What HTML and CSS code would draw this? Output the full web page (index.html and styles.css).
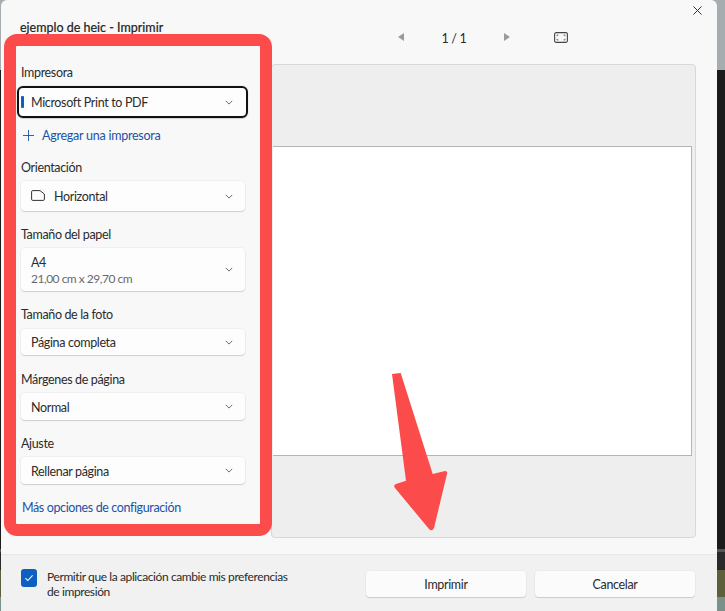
FILE: index.html
```html
<!DOCTYPE html>
<html>
<head>
<title>ejemplo de heic - Imprimir</title>
<link rel="stylesheet" href="styles.css">
</head>
<body>

<div class="backdrop">
  <div class="dialog">
    <div class="main">
      <div class="side">
        <h1 class="title">ejemplo de heic - Imprimir</h1>

        <div class="field-label printer-label">Impresora</div>
        <div class="select printer-select">
          <span class="accent"></span>
          <span class="value">Microsoft Print to PDF</span>
          <svg class="chevron" viewBox="0 0 10 6"><path d="M1 1l4 4 4-4"/></svg>
        </div>
        <div class="add-printer">
          <svg class="plus" viewBox="0 0 12 12"><path d="M6 0v12M0 6h12"/></svg>
          <a>Agregar una impresora</a>
        </div>

        <div class="field-label orient-label">Orientación</div>
        <div class="select">
          <svg class="page-icon" viewBox="0 0 14 11"><path d="M1.8.6H9l4.4 3.4v5.2a1.2 1.2 0 0 1-1.2 1.2H1.8A1.2 1.2 0 0 1 .6 9.2V1.8A1.2 1.2 0 0 1 1.8.6z"/></svg>
          <span class="value">Horizontal</span>
          <svg class="chevron" viewBox="0 0 10 6"><path d="M1 1l4 4 4-4"/></svg>
        </div>

        <div class="field-label">Tamaño del papel</div>
        <div class="select select-tall">
          <span class="value-stack">
            <span class="value">A4</span>
            <span class="sub">21,00 cm x 29,70 cm</span>
          </span>
          <svg class="chevron" viewBox="0 0 10 6"><path d="M1 1l4 4 4-4"/></svg>
        </div>

        <div class="field-label photo-label">Tamaño de la foto</div>
        <div class="select select-short">
          <span class="value">Página completa</span>
          <svg class="chevron" viewBox="0 0 10 6"><path d="M1 1l4 4 4-4"/></svg>
        </div>

        <div class="field-label margin-label">Márgenes de página</div>
        <div class="select select-mid">
          <span class="value">Normal</span>
          <svg class="chevron" viewBox="0 0 10 6"><path d="M1 1l4 4 4-4"/></svg>
        </div>

        <div class="field-label">Ajuste</div>
        <div class="select select-mid">
          <span class="value">Rellenar página</span>
          <svg class="chevron" viewBox="0 0 10 6"><path d="M1 1l4 4 4-4"/></svg>
        </div>

        <a class="more-link">Más opciones de configuración</a>
      </div>

      <div class="preview-side">
        <div class="pager">
          <svg class="nav-arrow" viewBox="0 0 6 8"><path d="M6 0v8L0 4z"/></svg>
          <span class="page-count">1 / 1</span>
          <svg class="nav-arrow" viewBox="0 0 6 8"><path d="M0 0v8l6-4z"/></svg>
          <svg class="fit-icon" viewBox="0 0 14 11">
            <rect class="fit-frame" x=".6" y=".6" width="12.8" height="9.8" rx="1.6"/>
            <path class="fit-corners" d="M3 4.2V3h1.4M11 4.2V3H9.6M3 6.8V8h1.4M11 6.8V8H9.6"/>
          </svg>
        </div>
        <div class="preview">
          <div class="sheet"></div>
        </div>
      </div>
    </div>

    <div class="footer">
      <div class="check-box">
        <svg viewBox="0 0 12 10"><path d="M1.5 5.2l3 3 6-6.4"/></svg>
      </div>
      <div class="check-text">Permitir que la aplicación cambie mis preferencias<br>de impresión</div>
      <div class="buttons">
        <button>Imprimir</button>
        <button>Cancelar</button>
      </div>
    </div>

    <svg class="close" viewBox="0 0 10 10"><path d="M.5.5l9 9M9.5.5l-9 9"/></svg>
  </div>
</div>

<!-- red marks drawn over the screenshot -->
<div class="mark-box"></div>
<svg class="mark-arrow" viewBox="0 0 60 165">
  <path d="M2 4L10.7 3L42.7 104L55 101Q58 101 57 104L44 158Q42 162 39 159L5 118Q3 115 6 114L16 110.7Z"/>
</svg>

</body>
</html>
```

FILE: styles.css
```css
* {
  box-sizing: border-box;
}

html, body {
  height: 100%;
}

body {
  margin: 0;
  font-family: Lato, "Noto Sans", sans-serif;
  font-size: 12.5px;
  letter-spacing: -0.35px;
  color: #2b2b2b;
  overflow: hidden;
  background-color: #1c1c1c;
}

.backdrop {
  height: 611px;
  padding-left: 1px;
  background: linear-gradient(#a6adb0 0, #a6adb0 70px, #1b1b1b 70px, #1b1b1b 549px, #555 549px, #555 552px, #2a2a2a 552px, #2a2a2a 570px, #5d5f3a 570px, #5d5f3a 597px, #7a9088 597px);
}

.dialog {
  position: relative;
  width: 716px;
  height: 611px;
  display: flex;
  flex-direction: column;
  background-color: #f8f8f8;
  border-radius: 6px 6px 0 0;
}

.main {
  flex: 1;
  display: flex;
}

.side {
  width: 270px;
  padding: 20px 0 0 20px;
  flex-shrink: 0;
}

.title {
  margin: 0 0 0 -1px;
  font-size: 12.5px;
  line-height: 16px;
  font-weight: 400;
  letter-spacing: 0;
  color: #222;
  -webkit-text-stroke: 0.2px #222;
}

.field-label {
  margin-top: 16px;
  line-height: 16px;
  padding-bottom: 5px;
}

.printer-label {
  margin-top: 29px;
}

.orient-label {
  margin-top: 17px;
}

.photo-label {
  padding-bottom: 6px;
}

.margin-label {
  margin-top: 17px;
}

.select {
  width: 224px;
  height: 30px;
  padding: 0 12px 0 10px;
  display: flex;
  align-items: center;
  background-color: #fdfdfd;
  border-radius: 4px;
  box-shadow: 0 1px 1px rgba(0, 0, 0, 0.14), 0 0 0 1px rgba(0, 0, 0, 0.03);
}

.select-tall {
  height: 43px;
}

.select-short {
  height: 26px;
}

.select-mid {
  height: 27px;
}

.printer-select {
  width: 231px;
  height: 32px;
  margin-left: -4px;
  padding-left: 2px;
  padding-right: 13px;
  border: 2px solid #111;
  border-radius: 6px;
}

.accent {
  width: 3px;
  height: 12px;
  margin-right: 7px;
  border-radius: 1px;
  background-color: #0f5fc0;
}

.value {
  flex: 1;
  padding-top: 2px;
  line-height: 16px;
}

.value-stack {
  flex: 1;
  display: flex;
  flex-direction: column;
}

.sub {
  font-size: 12px;
  letter-spacing: -0.5px;
  color: #6a6a6a;
  line-height: 16px;
}

.chevron {
  width: 8px;
  height: 5px;
  fill: none;
  stroke: #555;
  stroke-width: 1.1;
}

.page-icon {
  width: 14px;
  height: 11px;
  margin-right: 9px;
  margin-top: -1px;
  fill: none;
  stroke: #333;
  stroke-width: 1;
}

.add-printer {
  display: flex;
  align-items: center;
  height: 16px;
  margin-top: 9px;
  padding-left: 2px;
  letter-spacing: -0.25px;
  color: #1a52a8;
}

.plus {
  width: 11px;
  height: 11px;
  margin-right: 8px;
  fill: none;
  stroke: #1a52a8;
  stroke-width: 1;
}

.more-link {
  display: block;
  margin-top: 16px;
  padding-left: 1px;
  line-height: 16px;
  letter-spacing: -0.38px;
  color: #1a52a8;
}

.preview-side {
  flex: 1;
  padding-right: 21px;
}

.pager {
  height: 64px;
  display: flex;
  align-items: center;
  padding: 10px 0 0 127px;
}

.nav-arrow {
  width: 6px;
  height: 8px;
  fill: #9a9a9a;
}

.page-count {
  width: 100px;
  text-align: center;
  padding-top: 2px;
}

.fit-icon {
  width: 14px;
  height: 11px;
  margin-left: 44px;
  fill: none;
}

.fit-frame {
  stroke: #444;
  stroke-width: 1.1;
}

.fit-corners {
  stroke: #555;
  stroke-width: 0.8;
}

.preview {
  height: 474px;
  padding-top: 81px;
  background-color: #eeeeee;
  border: 1px solid #d8d8d8;
  border-radius: 4px;
}

.sheet {
  width: 419px;
  height: 310px;
  margin-left: auto;
  margin-right: 3px;
  background-color: #ffffff;
  border: 1px solid #b4b4b4;
  border-left: 0;
}

.footer {
  height: 57px;
  display: flex;
  align-items: center;
  padding: 0 22px 0 20px;
  background-color: #f1f1f1;
  border-top: 1px solid #e7e7e7;
}

.check-box {
  width: 16px;
  height: 18px;
  margin-bottom: 10px;
  display: flex;
  align-items: center;
  justify-content: center;
  border-radius: 3px;
  background-color: #0f5fc0;
}

.check-box svg {
  width: 10px;
  height: 8px;
  fill: none;
  stroke: #ffffff;
  stroke-width: 1.3;
}

.check-text {
  margin-left: 10px;
  margin-top: 2px;
  font-size: 12px;
  letter-spacing: -0.4px;
  line-height: 15px;
}

.buttons {
  margin-left: auto;
  margin-top: 2px;
  display: flex;
  gap: 9px;
}

button {
  width: 160px;
  height: 26px;
  padding: 0;
  border: none;
  border-radius: 4px;
  font-family: inherit;
  font-size: 12.5px;
  letter-spacing: -0.35px;
  color: #2b2b2b;
  background-color: #fbfbfb;
  box-shadow: 0 1px 1px rgba(0, 0, 0, 0.14), 0 0 0 1px rgba(0, 0, 0, 0.02);
}

.close {
  position: absolute;
  top: 6px;
  right: 15px;
  width: 9px;
  height: 9px;
  fill: none;
  stroke: #333;
  stroke-width: 1.1;
}

/* annotations */
.mark-box {
  position: absolute;
  left: 4px;
  top: 34px;
  width: 268px;
  height: 502px;
  border: 12.5px solid #fb4c4b;
  border-radius: 13px;
}

.mark-arrow {
  position: absolute;
  left: 390px;
  top: 370px;
  width: 60px;
  height: 165px;
  fill: #fb4c4b;
}
```
